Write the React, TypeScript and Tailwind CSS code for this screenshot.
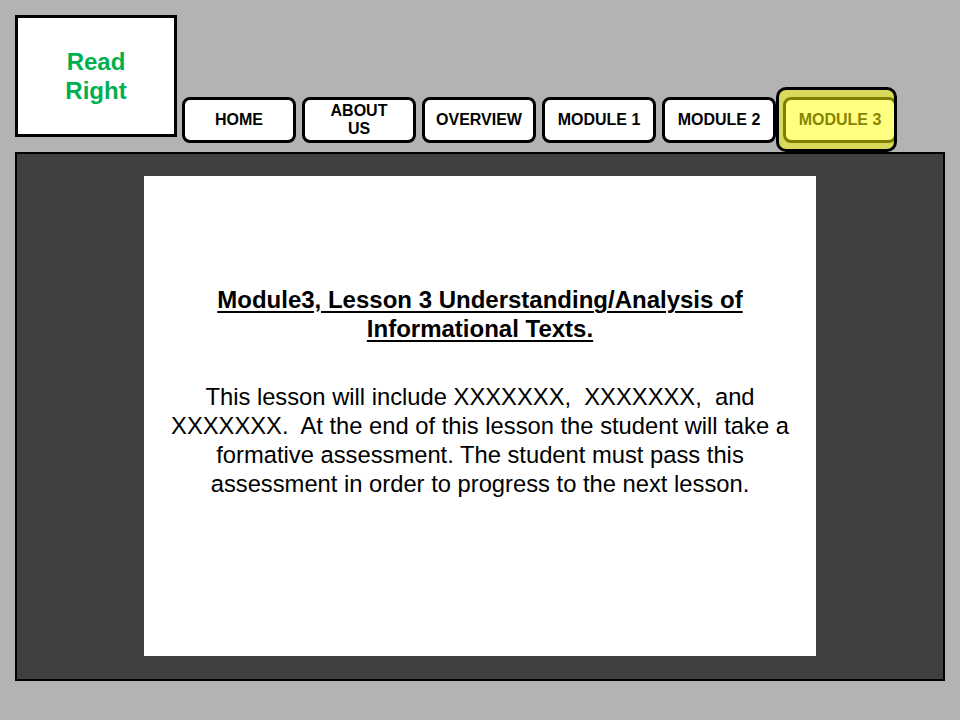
import React from "react";

const tabs = ["HOME", "ABOUT US", "OVERVIEW", "MODULE 1", "MODULE 2"];

function Tab({ label }: { label: string }) {
    return (
        <div className="w-[114px] h-[46px] mb-[9px] bg-white border-[3px] border-black rounded-[8px] flex items-center justify-center text-center font-bold text-[16px] leading-[18px] text-black">
            {label === "ABOUT US" ? (
                <span>ABOUT<br />US</span>
            ) : (
                <span>{label}</span>
            )}
        </div>
    );
}

export default function App(): React.JSX.Element {
    return (
        <div className="w-[960px] h-[720px] bg-[#b3b3b3] overflow-hidden" style={{ fontFamily: '"Liberation Sans", Arial, sans-serif' }}>
            <div className="flex items-start pt-[15px] pl-[15px]">
                <div className="w-[162px] h-[122px] bg-white border-[3px] border-black flex items-center justify-center text-center">
                    <span className="font-bold text-[24px] leading-[29px] text-[#00b050]">Read<br />Right</span>
                </div>
                <div className="flex items-end gap-[6px] ml-[5px] mt-[72px]">
                    {tabs.map((t) => (
                        <Tab key={t} label={t} />
                    ))}
                    <div className="w-[121px] h-[65px] -ml-[6px] bg-[#d9d95b] border-[3px] border-black rounded-[10px] overflow-hidden pl-[4px] pt-[7px]">
                        <div className="w-[114px] h-[46px] bg-[#ffff80] border-[3px] border-[#808000] rounded-[8px] flex items-center justify-center font-bold text-[16px] text-[#858500]">
                            MODULE 3
                        </div>
                    </div>
                </div>
            </div>
            <div className="ml-[15px] w-[930px] h-[529px] bg-[#404040] border-2 border-black">
                <div className="mx-auto mt-[22px] w-[672px] h-[480px] bg-white pt-[109px] text-center text-black">
                    <h1 className="font-bold text-[24px] leading-[29px] underline underline-offset-[3px] decoration-2">
                        Module3, Lesson 3 Understanding/Analysis of<br />Informational Texts.
                    </h1>
                    <p className="mt-[39px] text-[23.75px] leading-[29px]">
                        This lesson will include XXXXXXX,&nbsp; XXXXXXX,&nbsp; and<br />
                        XXXXXXX.&nbsp; At the end of this lesson the student will take a<br />
                        formative assessment. The student must pass this<br />
                        assessment in order to progress to the next lesson.
                    </p>
                </div>
            </div>
        </div>
    );
}
